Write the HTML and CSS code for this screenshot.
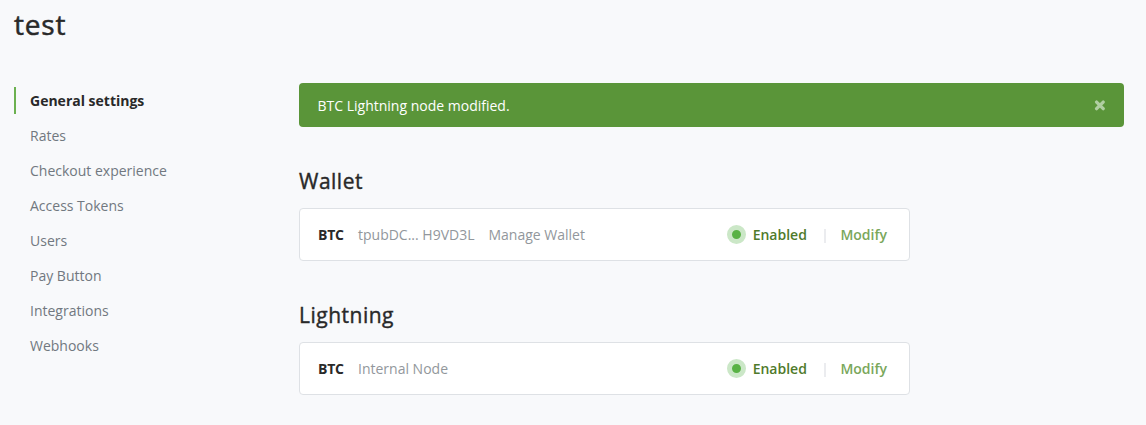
FILE: index.html
```html
<!DOCTYPE html>
<html lang="en">
<head>
<meta charset="utf-8">
<title>test</title>
<link rel="stylesheet" href="styles.css">
</head>
<body>
<h1 class="page-title">test</h1>
<div class="layout">
  <nav class="nav">
    <a class="nav-link active">General settings</a>
    <a class="nav-link">Rates</a>
    <a class="nav-link">Checkout experience</a>
    <a class="nav-link">Access Tokens</a>
    <a class="nav-link">Users</a>
    <a class="nav-link">Pay Button</a>
    <a class="nav-link">Integrations</a>
    <a class="nav-link">Webhooks</a>
  </nav>
  <main class="content">
    <div class="alert"><span>BTC Lightning node modified.</span><span class="close"><svg width="12" height="12" viewBox="0 0 12 12"><path d="M2.6 3.1L9.2 9.7M9.2 3.1L2.6 9.7" stroke="currentColor" stroke-width="3.3" stroke-linecap="round"/></svg></span></div>
    <section class="section">
      <h2 class="heading">Wallet</h2>
      <div class="card">
        <strong class="code">BTC</strong>
        <span class="value">tpubDC... H9VD3L</span>
        <a class="manage">Manage Wallet</a>
        <span class="status"><i class="dot"></i>Enabled</span>
        <span class="divider"></span>
        <a class="modify">Modify</a>
      </div>
    </section>
    <section class="section">
      <h2 class="heading">Lightning</h2>
      <div class="card">
        <strong class="code">BTC</strong>
        <span class="value">Internal Node</span>
        <span class="status"><i class="dot"></i>Enabled</span>
        <span class="divider"></span>
        <a class="modify">Modify</a>
      </div>
    </section>
  </main>
</div>
</body>
</html>
```
FILE: styles.css
```css
* { box-sizing: border-box; }
body {
  margin: 0;
  height: 425px;
  overflow: hidden;
  background: #f8f9fb;
  color: #292929;
  font: 14px/21px "Open Sans", sans-serif;
}
.page-title {
  margin: 0;
  padding: 7px 0 1px 14px;
  font-size: 28px;
  line-height: 34px;
  font-weight: 500;
  letter-spacing: 0.8px;
  -webkit-text-stroke: 0.5px currentColor;
}
.layout { display: flex; padding: 41px 22px 0 14px; }
.nav { width: 285px; padding-top: 4px; display: flex; flex-direction: column; gap: 8px; }
.nav-link { height: 27px; line-height: 27px; padding-left: 14px; border-left: 2px solid transparent; color: #717880; }
.nav-link.active { color: #292929; font-weight: 700; border-color: #6cb150; }
.content { flex: 1; }
.alert {
  display: flex;
  justify-content: space-between;
  align-items: center;
  height: 44px;
  padding: 0 18.5px;
  border-radius: 4px;
  background: #5a9539;
  color: #fff;
}
.close { display: flex; color: #b0cea2; }
.section { width: 611px; margin-top: 40px; }
.heading {
  margin: 0 0 13px;
  font-size: 21px;
  line-height: 28px;
  font-weight: 500;
  letter-spacing: 0.5px;
  -webkit-text-stroke: 0.4px currentColor;
}
.card {
  display: flex;
  align-items: center;
  height: 53px;
  padding: 0 21px 0 18px;
  border: 1px solid #dee1e5;
  border-radius: 4px;
  background: #fff;
}
.code { width: 40px; font-weight: 700; letter-spacing: -0.2px; }
.value, .manage { color: #92979c; }
.manage { margin-left: 14px; }
.status { display: flex; align-items: center; margin-left: auto; color: #4f7a2b; font-weight: 600; }
.dot { width: 19px; height: 19px; margin-right: 7px; border: 5px solid #cbe7c7; border-radius: 50%; background: #59b245; }
.divider { width: 2px; height: 14px; margin: 2px 14.5px 0 17px; background: #ebecef; }
.modify { margin-right: 1px; color: #7aa75b; font-weight: 600; }
```
